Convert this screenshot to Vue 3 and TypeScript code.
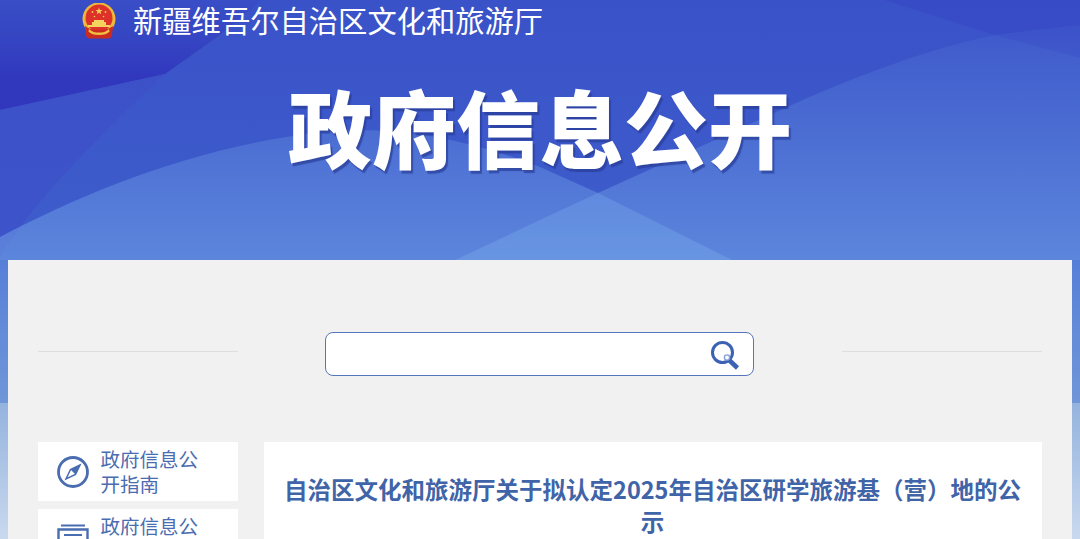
<script setup lang="ts">
interface NavItem { label: string; icon: 'compass' | 'book' }
const navItems: NavItem[] = [
  { label: '政府信息公开指南', icon: 'compass' },
  { label: '政府信息公开制度', icon: 'book' },
]
</script>

<template>
  <div class="page">
    <svg class="bg" width="1080" height="539" viewBox="0 0 1080 539" preserveAspectRatio="none">
      <defs>
        <linearGradient id="base" x1="0" y1="0" x2="0" y2="1">
          <stop offset="0" stop-color="#3a52c8" />
          <stop offset="1" stop-color="#3e5ecc" />
        </linearGradient>
        <linearGradient id="dark" x1="0" y1="0" x2="0" y2="110" gradientUnits="userSpaceOnUse">
          <stop offset="0" stop-color="#3340c0" stop-opacity="0.25" />
          <stop offset="0.7" stop-color="#3036bd" stop-opacity="0.95" />
          <stop offset="1" stop-color="#3036bd" stop-opacity="0.95" />
        </linearGradient>
        <linearGradient id="wave" x1="0" y1="25" x2="0" y2="262" gradientUnits="userSpaceOnUse">
          <stop offset="0" stop-color="#6f9ee6" stop-opacity="0.08" />
          <stop offset="0.45" stop-color="#6f9ee6" stop-opacity="0.3" />
          <stop offset="1" stop-color="#6f9ee6" stop-opacity="0.62" />
        </linearGradient>
        <linearGradient id="strip" x1="0" y1="0" x2="0" y2="1">
          <stop offset="0" stop-color="#94b3dd" />
          <stop offset="1" stop-color="#c9d9ef" />
        </linearGradient>
        <linearGradient id="lower" x1="0" y1="260" x2="0" y2="403" gradientUnits="userSpaceOnUse">
          <stop offset="0" stop-color="#5680d8" />
          <stop offset="1" stop-color="#7096d8" />
        </linearGradient>
      </defs>
      <rect width="1080" height="262" fill="url(#base)" />
      <path d="M0 0 H262 L220 35 L165 74 L0 110 Z" fill="url(#dark)" />
      <path d="M884 0 L995 35 L1080 58 V0 Z" fill="#3548c4" opacity="0.6" />
      <path d="M0 257 C30 205 100 135 165 74 L0 110 Z" fill="#3d50c7" opacity="0.7" />
      <path d="M0 237 C90 190 200 145 330 131 C400 126 470 140 540 167 L598 193 L736 262 H0 Z" fill="url(#wave)" />
      <path d="M451 262 L540 220 L598 193 L781 110 C850 78 930 48 995 35 L1080 25 V262 Z" fill="url(#wave)" />
      <rect y="260" width="1080" height="143" fill="url(#lower)" />
      <rect y="403" width="1080" height="136" fill="url(#strip)" />
    </svg>

    <header class="site">
      <svg class="emblem" width="34" height="36" viewBox="0 0 34 36">
        <circle cx="17" cy="16" r="16.5" fill="#eeb93a" />
        <circle cx="17" cy="15" r="13.5" fill="#dc3229" />
        <path d="M17 4.500l.9 2.500 2.600.1-2 1.600.7 2.500-2.200-1.500-2.200 1.500.7-2.500-2-1.600 2.600-.1z" fill="#f2cf55" />
        <circle cx="10.500" cy="9" r="0.900" fill="#f2cf55" />
        <circle cx="23.500" cy="9" r="0.900" fill="#f2cf55" />
        <circle cx="12.500" cy="13.500" r="0.800" fill="#f2cf55" />
        <circle cx="21.500" cy="13.500" r="0.800" fill="#f2cf55" />
        <path d="M12 17h10v2h2v3H10v-3h2z" fill="#f4d35e" />
        <rect x="6" y="22" width="22" height="2" fill="#f4d35e" />
        <path d="M3 23c3 2 6 4 14 4s11-2 14-4l-1 9c-.3 2-1.500 3-3 3.500H7c-1.500-.5-2.700-1.500-3-3.500z" fill="#c92a22" />
        <path d="M7 26c3 3 6 3.500 10 3.500S24 29 27 26l.6 2.500c-2 2.500-6 3.500-10.600 3.500S8.500 31 6.400 28.500z" fill="#f0c040" />
      </svg>
      <span class="site-name">新疆维吾尔自治区文化和旅游厅</span>
    </header>

    <h1 class="title">政府信息公开</h1>

    <main class="panel">
      <div class="search-row">
        <span class="rule"></span>
        <div class="search">
          <svg width="32" height="32" viewBox="0 0 32 32">
            <circle cx="13.500" cy="14.500" r="10" fill="none" stroke="#3c62b4" stroke-width="3" />
            <path d="M20 22l8.500 8" stroke="#3c62b4" stroke-width="4.600" />
            <circle cx="18" cy="19.500" r="2.600" fill="#fff" stroke="#86a0d2" stroke-width="1.400" />
          </svg>
        </div>
        <span class="rule"></span>
      </div>

      <div class="columns">
        <nav class="side">
          <a v-for="item in navItems" :key="item.label" class="nav-item">
            <svg v-if="item.icon === 'compass'" class="nav-icon" width="32" height="32" viewBox="0 0 32 32">
              <circle cx="16" cy="16" r="14.500" fill="none" stroke="#4a6cb0" stroke-width="2.800" />
              <path d="M23 9l-9.500 4.500L9 23l9.500-4.500z" fill="#fff" stroke="#4a6cb0" stroke-width="1.500" />
              <path d="M23 9l-9.500 4.500 5 5z" fill="#4a6cb0" />
            </svg>
            <svg v-else class="nav-icon" width="32" height="32" viewBox="0 0 32 32">
              <path d="M1.500 6.500h29v23h-29z" fill="none" stroke="#4a6cb0" stroke-width="2.400" />
              <path d="M4 2.500h24M7 12h18M7 17h18M7 22h12" stroke="#4a6cb0" stroke-width="2" />
            </svg>
            <span class="nav-label">{{ item.label }}</span>
          </a>
        </nav>
        <article class="article">
          <h2 class="article-title">自治区文化和旅游厅关于拟认定2025年自治区研学旅游基（营）地的公示</h2>
        </article>
      </div>
    </main>
  </div>
</template>

<style>
html, body { margin: 0; height: 539px; overflow: hidden; }
</style>

<style scoped>
.page {
  position: relative;
  width: 1080px;
  height: 539px;
  overflow: hidden;
  font-family: "Noto Sans CJK SC", "Liberation Sans", sans-serif;
}
.bg { position: absolute; inset: 0; }
.site {
  position: relative;
  display: flex;
  align-items: flex-start;
  height: 42px;
  padding-left: 82px;
  gap: 17px;
}
.emblem { flex: none; margin-top: 3px; }
.site-name { font-size: 29.3px; line-height: 38px; color: #fff; white-space: nowrap; }
.title {
  position: relative;
  margin: 0;
  height: 218px;
  box-sizing: border-box;
  padding-top: 26px;
  text-align: center;
  font-size: 84px;
  line-height: 116px;
  font-weight: 900;
  color: #fff;
  text-shadow: 2px 3px 1px rgba(40, 60, 150, 0.7);
}
.panel {
  position: relative;
  margin-left: 7.5px;
  width: 1064px;
  height: 279px;
  box-sizing: border-box;
  background: #f1f1f1;
  padding: 0 30px;
  overflow: hidden;
}
.search-row {
  display: flex;
  align-items: center;
  justify-content: space-between;
  padding-top: 72px;
}
.rule { width: 200px; height: 1px; background: #dedede; margin-top: -5px; }
.search {
  box-sizing: border-box;
  width: 429px;
  height: 44px;
  border: 1.4px solid #5576bc;
  border-radius: 8px;
  background: #fff;
  display: flex;
  align-items: center;
  justify-content: flex-end;
  padding-right: 12px;
}
.columns {
  display: flex;
  align-items: flex-start;
  gap: 26px;
  padding-top: 66px;
}
.side { width: 200px; flex: none; display: flex; flex-direction: column; gap: 8px; }
.nav-item {
  display: flex;
  align-items: center;
  background: #fff;
  height: 59px;
  padding-left: 19px;
  gap: 12px;
  color: #4a6cb0;
}
.nav-icon { flex: none; }
.nav-label { width: 100px; font-size: 19.5px; line-height: 25px; padding-bottom: 2px; }
.article { flex: 1; background: #fff; height: 200px; padding: 31px 20px 0; }
.article-title {
  margin: 0;
  text-align: center;
  font-size: 23.5px;
  line-height: 32px;
  font-weight: 700;
  color: #3f64a8;
}
</style>
